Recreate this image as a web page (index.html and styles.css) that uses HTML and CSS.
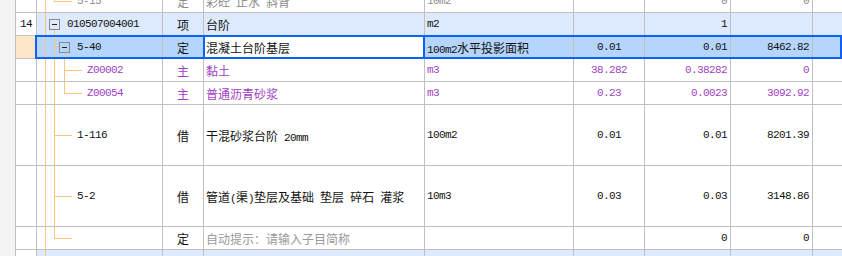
FILE: index.html
```html
<!DOCTYPE html>
<html lang="zh-CN">
<head>
  <meta charset="UTF-8">
  <meta name="viewport" content="width=device-width, initial-scale=1.0">
  <title>分部分项 - 组价</title>
  <link rel="stylesheet" href="styles.css">
</head>
<body>
  <div class="sheet">
    <div class="gutter"></div>

    <div class="grid">
      <!-- previous item, scrolled half out of view -->
      <div class="row dim">
        <div class="cell no"></div>
        <div class="cell code t-sub-last lv2x n">5-15</div>
        <div class="cell type">定</div>
        <div class="cell name"><span>彩砼<span class="n"> </span>止水<span class="n"> </span>斜背</span></div>
        <div class="cell unit n">10m2</div>
        <div class="cell q1 n"></div>
        <div class="cell q2 n">0</div>
        <div class="cell price n">0</div>
        <div class="cell rest"></div>
      </div>

      <div class="row item">
        <div class="cell no n">14</div>
        <div class="cell code t-item lv1"><span class="box"></span><span class="n">010507004001</span></div>
        <div class="cell type">项</div>
        <div class="cell name">台阶</div>
        <div class="cell unit n">m2</div>
        <div class="cell q1 n"></div>
        <div class="cell q2 n">1</div>
        <div class="cell price n"></div>
        <div class="cell rest"></div>
      </div>

      <div class="row sel">
        <div class="cell no peach"></div>
        <div class="cell code t-sel lv2"><span class="box"></span><span class="n">5-40</span></div>
        <div class="cell type">定</div>
        <div class="cell name edit">混凝土台阶基层</div>
        <div class="cell unit"><span><span class="n">100m2</span>水平投影面积</span></div>
        <div class="cell q1 n">0.01</div>
        <div class="cell q2 n">0.01</div>
        <div class="cell price n">8462.82</div>
        <div class="cell rest"></div>
      </div>

      <div class="row mat">
        <div class="cell no"></div>
        <div class="cell code t-mat lv3 n">Z00002</div>
        <div class="cell type">主</div>
        <div class="cell name">黏土</div>
        <div class="cell unit n">m3</div>
        <div class="cell q1 n">38.282</div>
        <div class="cell q2 n">0.38282</div>
        <div class="cell price n">0</div>
        <div class="cell rest"></div>
      </div>

      <div class="row mat">
        <div class="cell no"></div>
        <div class="cell code t-mat-last lv3 n">Z00054</div>
        <div class="cell type">主</div>
        <div class="cell name">普通沥青砂浆</div>
        <div class="cell unit n">m3</div>
        <div class="cell q1 n">0.23</div>
        <div class="cell q2 n">0.0023</div>
        <div class="cell price n">3092.92</div>
        <div class="cell rest"></div>
      </div>

      <div class="row tall">
        <div class="cell no"></div>
        <div class="cell code t-sub lv2x n">1-116</div>
        <div class="cell type">借</div>
        <div class="cell name"><span>干混砂浆台阶<span class="n"> 20mm</span></span></div>
        <div class="cell unit n">100m2</div>
        <div class="cell q1 n">0.01</div>
        <div class="cell q2 n">0.01</div>
        <div class="cell price n">8201.39</div>
        <div class="cell rest"></div>
      </div>

      <div class="row tall">
        <div class="cell no"></div>
        <div class="cell code t-sub lv2x n">5-2</div>
        <div class="cell type">借</div>
        <div class="cell name"><span>管道<span class="n">(</span>渠<span class="n">)</span>垫层及基础<span class="n"> </span>垫层<span class="n"> </span>碎石<span class="n"> </span>灌浆</span></div>
        <div class="cell unit n">10m3</div>
        <div class="cell q1 n">0.03</div>
        <div class="cell q2 n">0.03</div>
        <div class="cell price n">3148.86</div>
        <div class="cell rest"></div>
      </div>

      <div class="row">
        <div class="cell no"></div>
        <div class="cell code t-sub-last lv2x"></div>
        <div class="cell type">定</div>
        <div class="cell name hint">自动提示：请输入子目简称</div>
        <div class="cell unit"></div>
        <div class="cell q1 n"></div>
        <div class="cell q2 n">0</div>
        <div class="cell price n">0</div>
        <div class="cell rest"></div>
      </div>

      <div class="row item">
        <div class="cell no n">15</div>
        <div class="cell code t-item lv1"><span class="box"></span><span class="n">010507001001</span></div>
        <div class="cell type">项</div>
        <div class="cell name">散水</div>
        <div class="cell unit n">m2</div>
        <div class="cell q1 n"></div>
        <div class="cell q2 n">1</div>
        <div class="cell price n"></div>
        <div class="cell rest"></div>
      </div>
    </div>
  </div>
</body>
</html>
```

FILE: styles.css
```css
/* Basic Reset */
* {
  margin: 0;
  padding: 0;
  box-sizing: border-box;
}

html, body {
  height: 100%;
  overflow: hidden;
  background-color: #fff;
}

body {
  font-family: "Noto Sans CJK SC", sans-serif;
  font-size: 12px;
  color: #111;
  --tr: linear-gradient(#f8c57f, #f8c57f);
}

/* Latin text and numbers */
.n {
  font-family: "Liberation Mono", "Noto Sans CJK SC", monospace;
  font-size: 11px;
  letter-spacing: -0.6px;
  white-space: pre;
}

/* Sheet */
.sheet {
  display: flex;
  height: 256px;
  overflow: hidden;
}

.gutter {
  width: 16px;
  flex: none;
  background-color: #f3f3f3;
  border-right: 1px solid #c0c0c0;
}

.grid {
  flex: 1;
  margin-top: -10px;
}

.row {
  display: flex;
  height: 23px;
}

.row.tall {
  height: 61px;
}

.cell {
  display: flex;
  align-items: center;
  padding: 0 2px;
  white-space: nowrap;
  overflow: hidden;
  border-right: 1px solid #c0c0c0;
  border-bottom: 1px solid #c0c0c0;
}

.no {
  width: 21px;
  justify-content: center;
  padding: 0;
}

.code {
  width: 126px;
  padding: 0;
  background-repeat: no-repeat;
}

.type {
  width: 41px;
  justify-content: center;
}

.name {
  width: 221px;
}

.unit {
  width: 149px;
}

.q1 {
  width: 71px;
  justify-content: center;
}

.q2 {
  width: 86px;
  justify-content: flex-end;
  padding-right: 3px;
}

.price {
  width: 82px;
  justify-content: flex-end;
  padding-right: 3px;
}

.rest {
  flex: 1;
  border-right: none;
}

/* Row kinds */
.row.item .cell {
  background-color: #dde9fc;
}

.row.item .cell.no {
  background-color: #fff;
}

.row.sel {
  position: relative;
}

.row.sel .cell {
  background-color: #b5d5fd;
}

.row.sel .cell.peach {
  background-color: #fee6c8;
}

.row.sel::after {
  content: "";
  position: absolute;
  top: -1px;
  left: 19px;
  right: 0;
  bottom: 0;
  border: 2px solid #0862f2;
  pointer-events: none;
}

.row.sel .cell.edit {
  position: relative;
  overflow: visible;
  background-color: #fff;
}

.cell.edit::after {
  content: "";
  position: absolute;
  top: -1px;
  bottom: -1px;
  left: -1px;
  right: -1px;
  border-left: 2px solid #0862f2;
  border-right: 2px solid #0862f2;
  z-index: 1;
}

.row.mat .cell {
  color: #a13fc2;
}

.row.dim .cell {
  color: #8c8c8c;
}

.hint {
  color: #9a9a9a;
}

/* Tree indent */
.lv1 { padding-left: 12px; }
.lv2 { padding-left: 22px; }
.lv2x { padding-left: 40px; }
.lv3 { padding-left: 50px; }

.box {
  width: 11px;
  height: 11px;
  flex: none;
  margin-right: 7px;
  border: 1px solid #8a8a8a;
  background-color: inherit;
  display: flex;
  align-items: center;
  justify-content: center;
}

.box::before {
  content: "";
  width: 5px;
  height: 1px;
  background-color: #222;
}

/* Tree guide lines */
.t-item {
  background-image: var(--tr), var(--tr);
  background-position: 8px 0, 17px 100%;
  background-size: 1px 100%, 1px 50%;
}

.t-sel {
  background-image: var(--tr), var(--tr), var(--tr), var(--tr);
  background-position: 8px 0, 17px 0, 27px 100%, 17px 50%;
  background-size: 1px 100%, 1px 100%, 1px 50%, 5px 1px;
}

.t-mat {
  background-image: var(--tr), var(--tr), var(--tr), var(--tr);
  background-position: 8px 0, 17px 0, 27px 0, 27px 50%;
  background-size: 1px 100%, 1px 100%, 1px 100%, 18px 1px;
}

.t-mat-last {
  background-image: var(--tr), var(--tr), var(--tr), var(--tr);
  background-position: 8px 0, 17px 0, 27px 0, 27px 50%;
  background-size: 1px 100%, 1px 100%, 1px calc(50% + 1px), 18px 1px;
}

.t-sub {
  background-image: var(--tr), var(--tr), var(--tr);
  background-position: 8px 0, 17px 0, 17px 50%;
  background-size: 1px 100%, 1px 100%, 18px 1px;
}

.t-sub-last {
  background-image: var(--tr), var(--tr), var(--tr);
  background-position: 8px 0, 17px 0, 17px 50%;
  background-size: 1px 100%, 1px calc(50% + 1px), 18px 1px;
}
```
